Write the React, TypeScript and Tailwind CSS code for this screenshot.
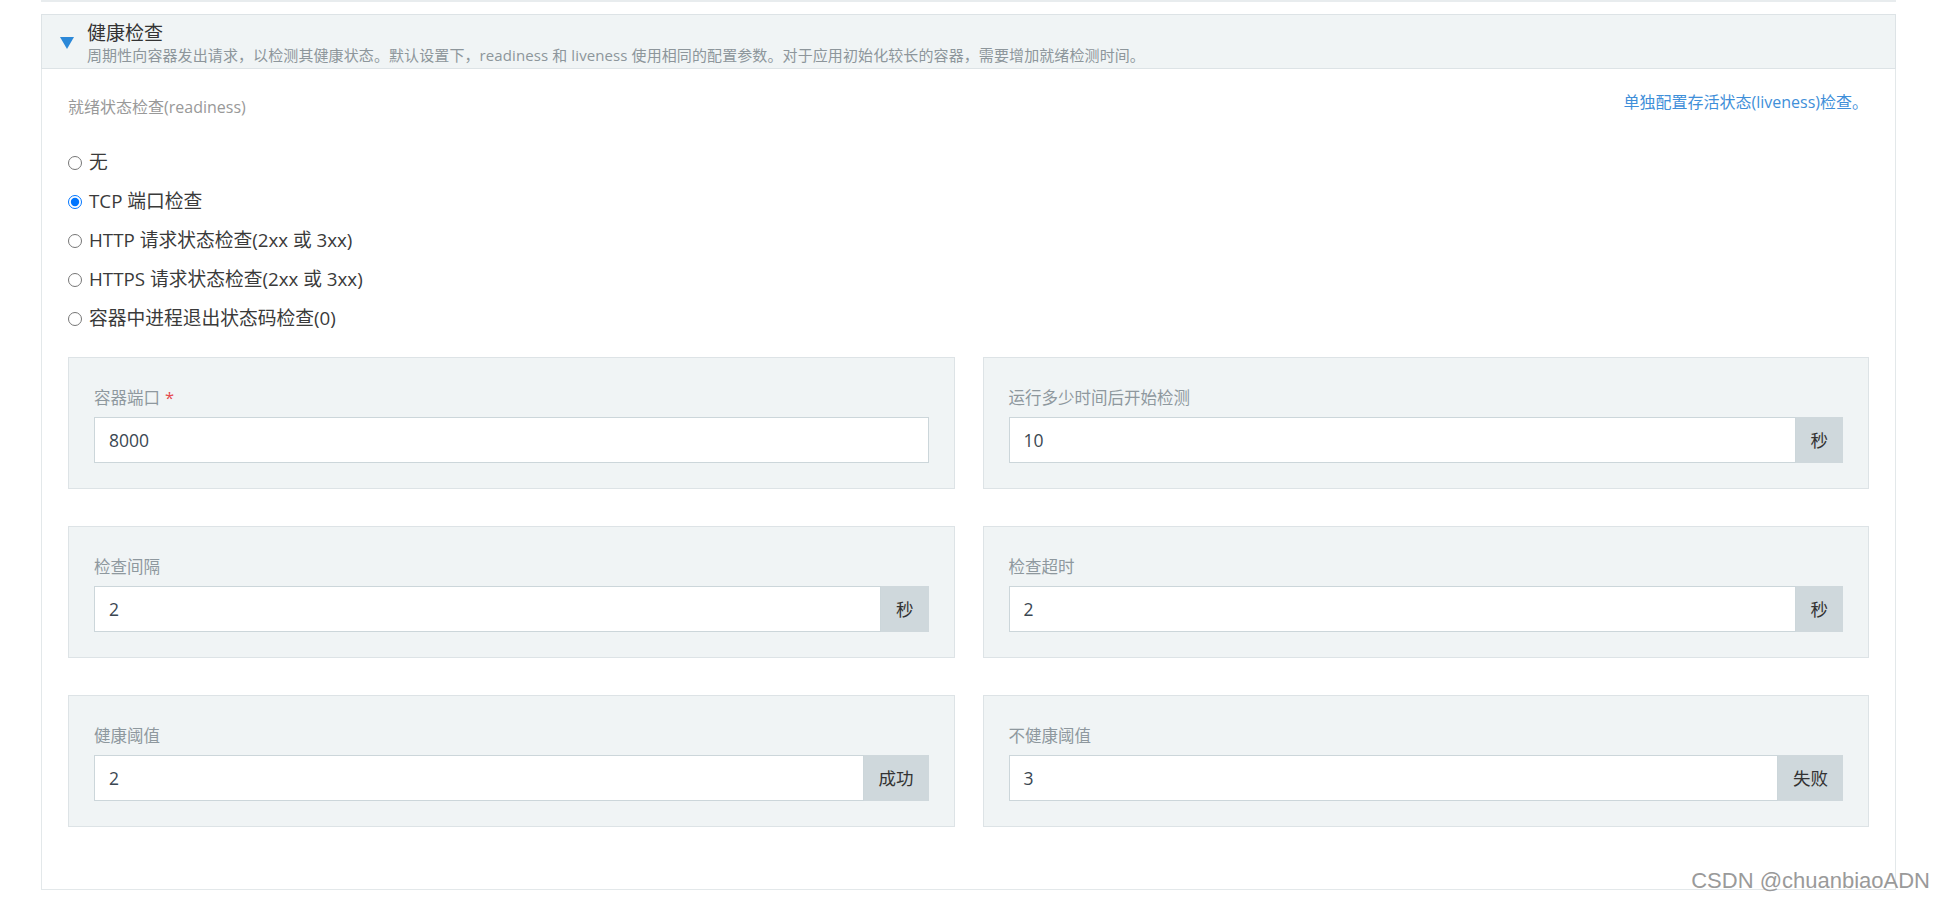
import React from "react";

const font = {
  fontFamily: '"Open Sans", "Noto Sans CJK SC", sans-serif',
};

interface FieldProps {
  label: string;
  value: string;
  unit?: string;
  required?: boolean;
}

const Field: React.FC<FieldProps> = ({ label, value, unit, required }) => {
  return (
    <div className="border border-[#dde3e6] bg-[#f0f4f5] px-[25px] pt-[30px] pb-[25px]">
      <div className="text-[16.5px] leading-[20px] text-[#8e989e] mb-[9px]">
        {label}
        {required && <span className="text-[#e5484d] ml-[5px]">*</span>}
      </div>
      <div className="flex h-[46px]">
        <div className="flex-1 flex items-center border border-[#ccd6da] bg-white pl-[14px] text-[17.5px] text-[#3b4752]">
          {value}
        </div>
        {unit && (
          <div className="flex items-center px-[15px] bg-[#cfd8dc] text-[17.5px] text-[#333]">
            {unit}
          </div>
        )}
      </div>
    </div>
  );
};

const options = [
  "无",
  "TCP 端口检查",
  "HTTP 请求状态检查(2xx 或 3xx)",
  "HTTPS 请求状态检查(2xx 或 3xx)",
  "容器中进程退出状态码检查(0)",
];

const fields: FieldProps[] = [
  { label: "容器端口", value: "8000", required: true },
  { label: "运行多少时间后开始检测", value: "10", unit: "秒" },
  { label: "检查间隔", value: "2", unit: "秒" },
  { label: "检查超时", value: "2", unit: "秒" },
  { label: "健康阈值", value: "2", unit: "成功" },
  { label: "不健康阈值", value: "3", unit: "失败" },
];

export default function App() {
  return (
    <div className="relative w-full h-[898px] bg-white overflow-hidden" style={font}>
      <div className="ml-[41px] w-[1855px]">
        {/* bottom edge of the previous section */}
        <div className="h-[2px] bg-[#e8ecee]" />

        <div className="mt-[12px] flex border border-[#dde3e6] bg-[#f0f4f5] pt-[6px] pb-[3px]">
          <div className="pl-[18px] pr-[13px] flex items-center">
            <svg width="14" height="12" viewBox="0 0 14 12">
              <polygon points="0,0 14,0 7,12" fill="#2b88d8" />
            </svg>
          </div>
          <div>
            <div className="text-[19px] leading-[24px] text-[#333]">健康检查</div>
            <div className="text-[15px] leading-[20px] text-[#8d969b] tracking-[0.1px]">
              周期性向容器发出请求，以检测其健康状态。默认设置下，readiness 和 liveness
              使用相同的配置参数。对于应用初始化较长的容器，需要增加就绪检测时间。
            </div>
          </div>
        </div>

        <div className="border-x border-b border-[#e3e8ea] px-[26px] pb-[62px]">
          <div className="flex justify-between items-start">
            <div className="pt-[28px] text-[16px] leading-[20px] text-[#999]">
              就绪状态检查(readiness)
            </div>
            <div className="pt-[23px] pr-[1px] text-[16px] leading-[20px] text-[#3f8fd9] cursor-pointer">
              单独配置存活状态(liveness)检查。
            </div>
          </div>

          <div className="mt-[26px]">
            {options.map((opt, i) => (
              <label key={opt} className="flex items-center h-[39px] gap-[7px]">
                <input
                  type="radio"
                  name="probe"
                  defaultChecked={i === 1}
                  className="w-[14px] h-[14px] m-0"
                />
                <span className="text-[18.75px] text-[#3a3a3a]">{opt}</span>
              </label>
            ))}
          </div>

          <div className="mt-[19px] grid grid-cols-2 gap-x-[28px] gap-y-[37px]">
            {fields.map((f) => (
              <Field key={f.label} {...f} />
            ))}
          </div>
        </div>
      </div>

      <div
        className="absolute right-[14px] bottom-[5px] text-[22px] leading-[25px] text-[#9a9a9a]"
        style={{ fontFamily: '"Liberation Sans", sans-serif' }}
      >
        CSDN @chuanbiaoADN
      </div>
    </div>
  );
}
